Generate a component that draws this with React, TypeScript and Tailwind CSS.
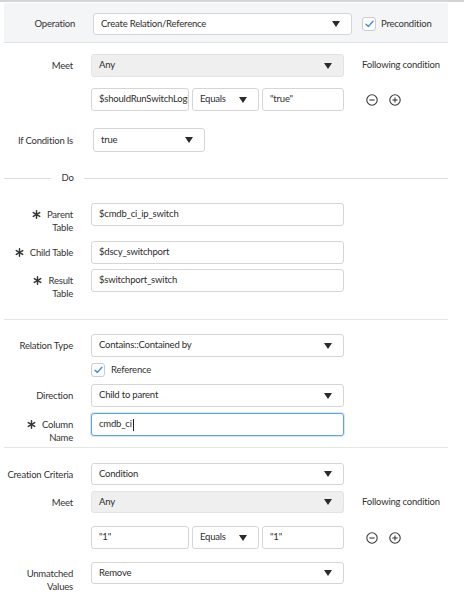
import React from "react";

const font = { fontFamily: "Lato, 'Open Sans', sans-serif" };
const T = "text-[9.5px] tracking-[-0.2px]";

function Caret() {
  return (
    <svg width="8" height="6" viewBox="0 0 8 6" className="shrink-0">
      <path d="M0 0 L8 0 L4 6 Z" fill="#2b2b2b" />
    </svg>
  );
}

function Star() {
  return (
    <svg width="9" height="9" viewBox="0 0 10 10" className="inline-block mr-[6px] -mt-[2px]">
      <g stroke="#333" strokeWidth="1.6" strokeLinecap="round">
        <line x1="5" y1="0.8" x2="5" y2="9.2" />
        <line x1="1.4" y1="2.9" x2="8.6" y2="7.1" />
        <line x1="1.4" y1="7.1" x2="8.6" y2="2.9" />
      </g>
    </svg>
  );
}

function Check() {
  return (
    <div className="w-[14px] h-[14px] rounded-[3px] border border-[#c9cdd2] bg-white flex items-center justify-center shrink-0">
      <svg width="9" height="8" viewBox="0 0 9 8">
        <path d="M1 4.2 L3.4 6.4 L8 1.2" fill="none" stroke="#3b8beb" strokeWidth="1.4" strokeLinecap="round" strokeLinejoin="round" />
      </svg>
    </div>
  );
}

function Select({ text, w = "w-[253px]", gray = false, h = "h-[23px]" }: { text: string; w?: string; gray?: boolean; h?: string }) {
  return (
    <div
      className={`${w} ${h} rounded-[3px] border ${gray ? "bg-[#efefef] border-[#e3e3e3]" : "bg-white border-[#d6d6d6]"} flex items-center justify-between pl-[7px] pr-[11px] ${T} text-[#2d2d2d] shrink-0`}
    >
      <span>{text}</span>
      <Caret />
    </div>
  );
}

function Input({ text, w = "w-[253px]", focus = false }: { text: string; w?: string; focus?: boolean }) {
  return (
    <div
      className={`${w} h-[23px] rounded-[3px] border ${focus ? "border-[#5fa0f0] shadow-[0_0_0_1px_#d6e7fc]" : "border-[#d6d6d6]"} bg-white flex items-center pl-[7px] ${T} text-[#2d2d2d] overflow-hidden whitespace-nowrap shrink-0`}
    >
      {text}
      {focus && <span className="inline-block w-px h-[12px] bg-[#222] ml-px" />}
    </div>
  );
}

function Label({ children }: { children: React.ReactNode }) {
  return <div className={`w-[73px] text-right ${T} leading-[13px] text-[#333] shrink-0`}>{children}</div>;
}

function Row({ label, children, mt, h = "h-[23px]" }: { label: React.ReactNode; children: React.ReactNode; mt: string; h?: string }) {
  return (
    <div className={`flex items-start ${mt} ${h}`}>
      <div className="pt-[5px]">
        <Label>{label}</Label>
      </div>
      <div className="ml-[18px]">{children}</div>
    </div>
  );
}

function CircleIcon({ plus }: { plus?: boolean }) {
  return (
    <svg width="12" height="12" viewBox="0 0 12 12">
      <circle cx="6" cy="6" r="5.2" fill="none" stroke="#3a3a3a" strokeWidth="1.1" />
      <line x1="3.4" y1="6" x2="8.6" y2="6" stroke="#3a3a3a" strokeWidth="1.1" />
      {plus && <line x1="6" y1="3.4" x2="6" y2="8.6" stroke="#3a3a3a" strokeWidth="1.1" />}
    </svg>
  );
}

function CondRow({ mt, a, b, c }: { mt: string; a: string; b: string; c: string }) {
  return (
    <div className={`flex items-center ${mt}`}>
      <div className="w-[91px] shrink-0" />
      <Input text={a} w="w-[98px]" />
      <div className="ml-[3px]">
        <Select text={b} w="w-[67px]" />
      </div>
      <div className="ml-[3px]">
        <Input text={c} w="w-[82px]" />
      </div>
      <div className="ml-[22px] flex items-center gap-[11px]">
        <CircleIcon />
        <CircleIcon plus />
      </div>
    </div>
  );
}

export default function App() {
  return (
    <div className="w-[464px] h-[598px] bg-white overflow-hidden" style={font}>
      <div className="h-[2px] bg-[#d4d4d4]" />
      <div className="mt-[1px] ml-[4px] w-[444px] h-[40px] bg-[#f4f5f7] border-b border-[#e2e4e7] flex items-start pt-[10px]">
        <div className={`w-[71px] text-right ${T} text-[#333] h-[22px] flex items-center justify-end`}>Operation</div>
        <div className="ml-[18px]">
          <Select text="Create Relation/Reference" w="w-[259px]" h="h-[22px]" />
        </div>
        <div className="ml-[10px] h-[22px] flex items-center">
          <Check />
          <span className={`ml-[5px] ${T} text-[#333]`}>Precondition</span>
        </div>
      </div>

      <div className="flex items-center mt-[11px]">
        <Label>Meet</Label>
        <div className="ml-[18px]">
          <Select text="Any" gray />
        </div>
        <span className={`ml-[18px] ${T} text-[#333] whitespace-nowrap`}>Following condition</span>
      </div>

      <CondRow mt="mt-[11px]" a="$shouldRunSwitchLogic" b="Equals" c={'"true"'} />

      <div className="flex items-center mt-[17px]">
        <Label>If Condition Is</Label>
        <div className="ml-[20px]">
          <Select text="true" w="w-[112px]" h="h-[24px]" />
        </div>
      </div>

      <div className="flex items-center mt-[19px] h-[14px] ml-[4px] w-[444px]">
        <div className="w-[47px] h-px bg-[#dedede]" />
        <div className={`w-[33px] text-center ${T} text-[#333]`}>Do</div>
        <div className="flex-1 h-px bg-[#dedede]" />
      </div>

      <Row mt="mt-[18px]" label={<><Star />Parent<br />Table</>}>
        <Input text="$cmdb_ci_ip_switch" />
      </Row>
      <Row mt="mt-[15px]" h="h-[22px]" label={<><Star />Child Table</>}>
        <Input text="$dscy_switchport" />
      </Row>
      <Row mt="mt-[6px]" label={<><Star />Result<br />Table</>}>
        <Input text="$switchport_switch" />
      </Row>

      <div className="mt-[27px] ml-[4px] w-[444px] h-px bg-[#e6e6e6]" />

      <Row mt="mt-[14px]" label="Relation Type">
        <Select text="Contains::Contained by" />
      </Row>
      <div className="flex items-center mt-[6px] h-[14px]">
        <div className="w-[91px]" />
        <Check />
        <span className={`ml-[6px] ${T} text-[#333]`}>Reference</span>
      </div>
      <Row mt="mt-[7px]" label="Direction">
        <Select text="Child to parent" />
      </Row>
      <Row mt="mt-[6px]" label={<><Star />Column<br />Name</>}>
        <Input text="cmdb_ci" focus />
      </Row>

      <div className="mt-[11px] ml-[4px] w-[444px] h-px bg-[#e6e6e6]" />

      <Row mt="mt-[15px]" h="h-[22px]" label="Creation Criteria">
        <Select text="Condition" h="h-[22px]" />
      </Row>
      <div className="flex items-center mt-[6px]">
        <Label>Meet</Label>
        <div className="ml-[18px]">
          <Select text="Any" gray h="h-[22px]" />
        </div>
        <span className={`ml-[18px] ${T} text-[#333] whitespace-nowrap`}>Following condition</span>
      </div>
      <CondRow mt="mt-[13px]" a={'"1"'} b="Equals" c={'"1"'} />
      <Row mt="mt-[13px]" h="h-[22px]" label={<>Unmatched<br />Values</>}>
        <Select text="Remove" h="h-[22px]" />
      </Row>
    </div>
  );
}
